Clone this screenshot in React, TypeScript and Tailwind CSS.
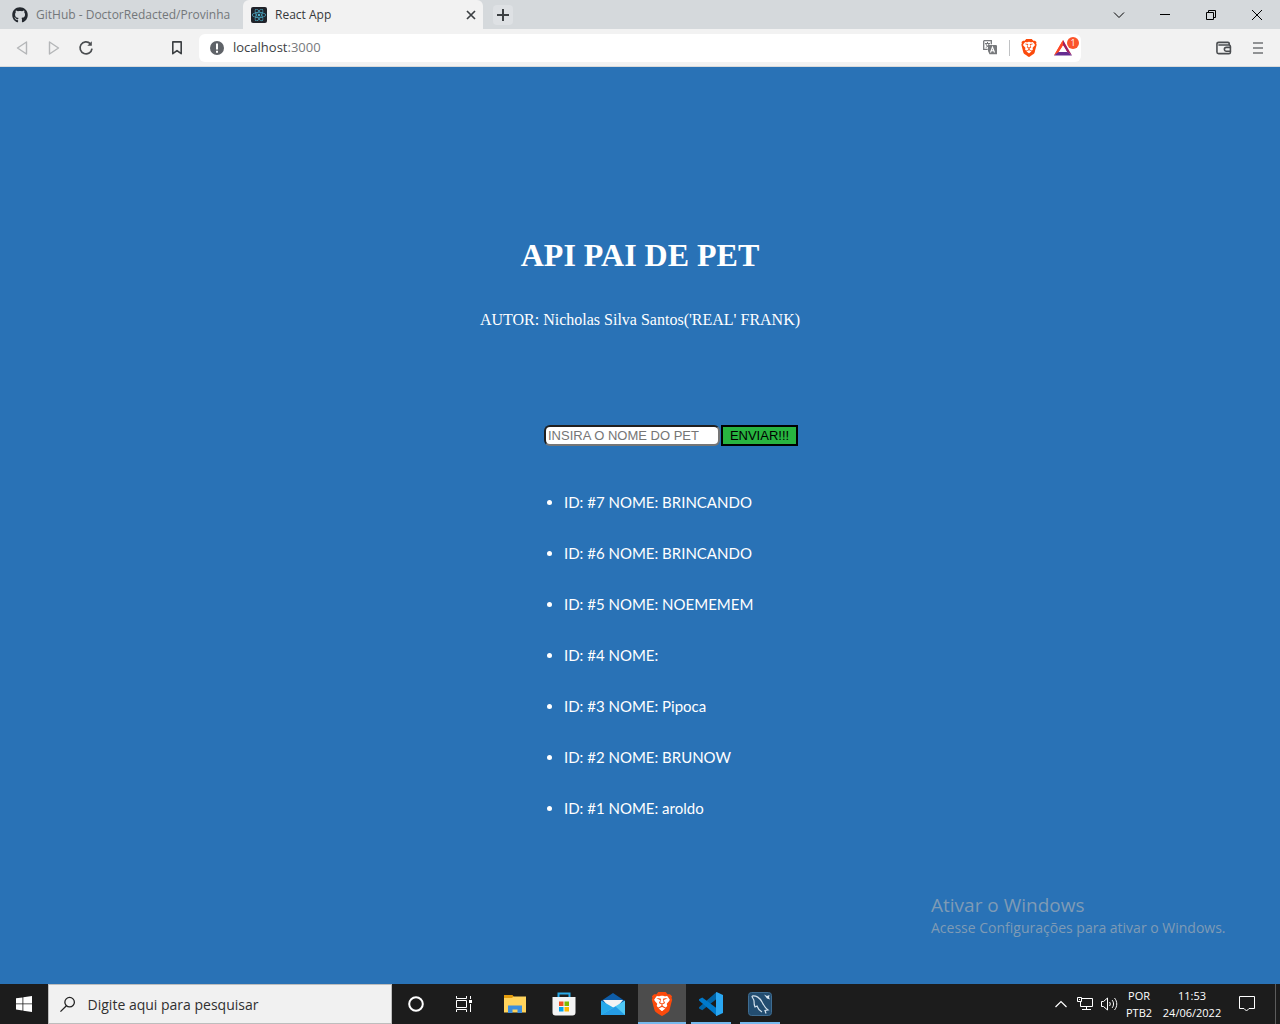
import { FaGithub, FaReact } from "react-icons/fa";
import { SiBrave } from "react-icons/si";

const pets = [
  { id: 7, nome: "BRINCANDO" },
  { id: 6, nome: "BRINCANDO" },
  { id: 5, nome: "NOEMEMEM" },
  { id: 4, nome: "" },
  { id: 3, nome: "Pipoca" },
  { id: 2, nome: "BRUNOW" },
  { id: 1, nome: "aroldo" },
];

function BraveLogo({ size }: { size: number }) {
  return (
    <span className="relative block">
      <svg width={size} height={size} viewBox="0 0 24 24" className="absolute inset-0">
        <path d="M7 3h10l3 4-2 11-6 4-6-4L4 7z" fill="#fff" />
      </svg>
      <SiBrave size={size} className="relative text-[#fb4a0c]" />
    </span>
  );
}

function TabStrip() {
  return (
    <header className="flex h-[29px] items-stretch bg-[#d5d9dc]">
      <div className="flex w-[243px] items-center gap-2 pl-3">
        <FaGithub size={16} className="text-[#24292f]" />
        <a href="#github" className="whitespace-nowrap text-[12px] text-[#73777a]">GitHub - DoctorRedacted/Provinha</a>
      </div>
      <div className="flex w-60 items-center gap-2 rounded-t-md bg-[#f2f2f2] pl-2 pr-[6px]">
        <span className="flex size-4 items-center justify-center rounded-xs bg-[#20232a]">
          <FaReact size={14} className="text-[#4fb3cf]" />
        </span>
        <span className="flex-1 text-[12px] text-[#36393c]">React App</span>
        <button aria-label="Fechar guia" className="flex size-3 items-center justify-center">
          <svg width="12" height="12" viewBox="0 0 12 12" stroke="#3c4043" strokeWidth="1.7"><path d="M2 2l8 8M10 2l-8 8" /></svg>
        </button>
      </div>
      <button aria-label="Nova guia" className="ml-[10px] mt-[5px] flex size-5 items-center justify-center rounded-sm bg-[#dee1e4]">
        <svg width="12" height="12" viewBox="0 0 12 12" stroke="#3c4043" strokeWidth="2"><path d="M6 0v12M0 6h12" /></svg>
      </button>
      <div className="ml-auto flex items-center text-black">
        <button aria-label="Pesquisar guias" className="flex w-[46px] justify-center">
          <svg width="12" height="8" viewBox="0 0 12 8" fill="none" stroke="currentColor"><path d="M1 1.5l5 5 5-5" /></svg>
        </button>
        <button aria-label="Minimizar" className="flex w-[46px] justify-center">
          <svg width="10" height="10" viewBox="0 0 10 10" stroke="currentColor"><path d="M0 4.5h10" /></svg>
        </button>
        <button aria-label="Restaurar" className="flex w-[46px] justify-center">
          <svg width="10" height="10" viewBox="0 0 10 10" fill="none" stroke="currentColor"><path d="M.5 2.5h7v7h-7zM2.500 2V.5h7v7H8" /></svg>
        </button>
        <button aria-label="Fechar" className="flex w-[46px] justify-center">
          <svg width="10" height="10" viewBox="0 0 10 10" stroke="currentColor"><path d="M0 0l10 10M10 0L0 10" /></svg>
        </button>
      </div>
    </header>
  );
}

function Toolbar() {
  return (
    <nav className="flex h-[38px] items-center border-b border-[#d9dadb] bg-[#f2f2f2]">
      <div className="flex w-[199px] items-center pl-4">
        <button aria-label="Voltar" className="mr-5">
          <svg width="12" height="16" viewBox="0 0 12 16" fill="none" stroke="#b4b6b8" strokeWidth="1.4" strokeLinejoin="round"><path d="M10.500 2v12L1.500 8z" /></svg>
        </button>
        <button aria-label="Avançar" className="mr-[18px]">
          <svg width="12" height="16" viewBox="0 0 12 16" fill="none" stroke="#b4b6b8" strokeWidth="1.4" strokeLinejoin="round"><path d="M1.500 2v12l9-6z" /></svg>
        </button>
        <button aria-label="Recarregar">
          <svg width="16" height="16" viewBox="0 0 16 16" fill="none" stroke="#4a4d50" strokeWidth="1.7"><path d="M12.300 3.600A6 6 0 1 0 14 8.600" /><path d="M9.300 5.800h4.500V1.300z" fill="#4a4d50" stroke="none" /></svg>
        </button>
        <button aria-label="Favoritar" className="ml-[77px]">
          <svg width="12" height="16" viewBox="0 0 12 16" fill="none" stroke="#3c4043" strokeWidth="1.6" strokeLinejoin="round"><path d="M1.800 1.900h8.400v11.800L6 10.600l-4.200 3.100z" /></svg>
        </button>
      </div>
      <div className="flex h-7 flex-1 items-center rounded-md bg-white pl-[11px]">
        <svg width="14" height="14" viewBox="0 0 14 14"><circle cx="7" cy="7" r="7" fill="#5f6368" /><path d="M6 2.500h2v6H6zM6 9.700h2v2H6z" fill="#fff" /></svg>
        <div className="relative ml-[9px] flex-1 text-[13px]">
          <span aria-hidden="true" className="text-[#3c4043]">localhost<span className="text-[#777a7d]">:3000</span></span>
          <input aria-label="Endereço" defaultValue="localhost:3000" className="absolute inset-0 w-full bg-transparent text-transparent outline-none" />
        </div>
        <button aria-label="Traduzir">
          <svg width="14" height="15" viewBox="0 0 14 15">
            <path d="M.7.7h7.600v3.500M.7.7v8.600h4" fill="none" stroke="#77797c" strokeWidth="1.3" />
            <path d="M2 3.500h5M4.500 2v1.500M3 4c.4 1.500 1.400 2.600 2.500 3M6 4C5.600 5.500 4 7 2.800 7.400" fill="none" stroke="#77797c" strokeWidth="1" />
            <path d="M5 5h8.200l.8.800v8.400H6.500L5 11z" fill="#77797c" />
            <path d="M7.500 12.500l2-5.500 2 5.500M8.200 10.800h2.600" fill="none" stroke="#fff" strokeWidth="1.1" />
          </svg>
        </button>
        <span className="ml-3 h-4 w-px bg-[#c0c2c4]" />
        <button aria-label="Brave Shields" className="ml-[10px]"><BraveLogo size={18} /></button>
        <button aria-label="Brave Rewards" className="relative ml-4 mr-[9px] w-[18px]">
          <svg width="18" height="16" viewBox="0 0 18 16">
            <path d="M9 0L4.500 11 0 15.500z" fill="#ff4724" />
            <path d="M9 0l3.500 7-3.500-1-5 7-4 2.500z" fill="#ff4724" />
            <path d="M9 0l9 15.500-5-3.500-4-7z" fill="#9e1f63" />
            <path d="M0 15.500L4.500 12h9l4.500 3.500z" fill="#662d91" />
            <path d="M9 5.500l3.800 6.500H5.200z" fill="#fff" />
          </svg>
          <span className="absolute -top-[3px] left-[13px] flex size-3 items-center justify-center rounded-full bg-[#fb542b] text-[9px] leading-3 text-white">1</span>
        </button>
      </div>
      <div className="flex w-[199px] items-center justify-end gap-5 pr-4">
        <button aria-label="Carteira">
          <svg width="16" height="14" viewBox="0 0 17 14" fill="none" stroke="#4a4d50" strokeWidth="1.700"><path d="M14 4V2.300c0-.8-.5-1.300-1.300-1.300H3C1.800 1 1 1.800 1 2.800v8.400C1 12.200 1.800 13 2.800 13h10.900c1 0 1.600-.6 1.600-1.500V5.300c0-.9-.6-1.500-1.500-1.500H2.500" /><path d="M16 6.300h-5a2.100 2.100 0 0 0 0 4.200h5" /></svg>
        </button>
        <button aria-label="Menu">
          <svg width="12" height="12" viewBox="0 0 12 12" stroke="#707376" strokeWidth="1.500"><path d="M1 1h10M1 6h10M1 11h10" /></svg>
        </button>
      </div>
    </nav>
  );
}

function PetPage() {
  return (
    <main className="relative flex-1 bg-[#2972b6] pt-[170px] text-white">
      <div className="text-center font-['Liberation_Serif',serif]">
        <h1 className="text-[32px] leading-9 font-bold">API PAI DE PET</h1>
        <p className="mt-[38px] text-[16px] leading-[18px]">AUTOR: Nicholas Silva Santos('REAL' FRANK)</p>
      </div>
      <div className="mx-auto mt-24 w-fit pl-[62px]">
        <form className="flex gap-px font-['Liberation_Sans',sans-serif] text-[13px]" onSubmit={(e) => e.preventDefault()}>
          <input
            aria-label="Nome do pet"
            placeholder="INSIRA O NOME DO PET"
            className="h-[21px] w-44 rounded-md border-2 border-t-[#1f1f1f] border-l-[#1f1f1f] border-r-[#767676] border-b-[#767676] bg-white px-[2px] text-black placeholder:text-[#757575]"
          />
          <button className="h-[21px] w-[77px] border-2 border-black bg-[#28b440] leading-4 text-black">ENVIAR!!!</button>
        </form>
        <ul className="mt-[47px] list-disc space-y-8 pl-5 font-['Lato',sans-serif] text-[15px] leading-[19px]">
          {pets.map((p) => (
            <li key={p.id}>ID: #{p.id} NOME: {p.nome}</li>
          ))}
        </ul>
      </div>
      <aside className="absolute right-[49px] bottom-[46px] w-[300px] whitespace-nowrap text-[#7f9bb5]">
        <p className="text-[19px] leading-[26px]">Ativar o Windows</p>
        <p className="text-[14px] leading-5">Acesse Configurações para ativar o Windows.</p>
      </aside>
    </main>
  );
}

function Taskbar() {
  return (
    <footer className="flex h-10 items-stretch bg-[#1c1c1c] text-white">
      <button aria-label="Iniciar" className="flex w-12 items-center justify-center">
        <svg width="16" height="16" viewBox="0 0 16 16" fill="#fff"><path d="M0 2.300L6.500 1.400v6.100H0zM7.300 1.200L16 0v7.500H7.300zM0 8.300h6.500v6.200L0 13.600zM7.300 8.300H16V16l-8.700-1.300z" /></svg>
      </button>
      <label className="flex w-[344px] items-center gap-3 border border-[#bdbdbd] bg-[#f1f1f1] pl-[11px]">
        <svg width="17" height="17" viewBox="0 0 17 17" fill="none" stroke="#222" strokeWidth="1.400"><circle cx="10.500" cy="6" r="5.200" /><path d="M7 9.800L.5 16.300" /></svg>
        <input aria-label="Pesquisar" placeholder="Digite aqui para pesquisar" className="w-full bg-transparent text-[14px] outline-none placeholder:text-[#303030]" />
      </label>
      <button aria-label="Cortana" className="flex w-12 items-center justify-center">
        <svg width="16" height="16" viewBox="0 0 16 16" fill="none" stroke="#fff" strokeWidth="2"><circle cx="8" cy="8" r="6.800" /></svg>
      </button>
      <button aria-label="Visão de tarefas" className="flex w-12 items-center justify-center">
        <svg width="16" height="16" viewBox="0 0 16 16" fill="none" stroke="#fff"><path d="M.5 0v2.500h10V0M.5 16v-2.500h10V16M.5 4.500h10v7H.5zM14.500 0v3M14.500 8v8" /><path d="M13 4h3v3h-3z" fill="#fff" stroke="none" /></svg>
      </button>
      <button aria-label="Explorador de Arquivos" className="ml-[3px] flex w-12 items-center justify-center">
        <svg width="22" height="18" viewBox="0 0 22 18"><path d="M0 0h8.500l1.500 2H22v5H0z" fill="#e39b0c" /><path d="M0 3h8l1.500-1.500H22v16H0z" fill="#ffd35c" /><path d="M4 18v-7.500h14V18h-4.500v-3.500h-5V18z" fill="#3b8ede" /></svg>
      </button>
      <button aria-label="Microsoft Store" className="ml-px flex w-12 items-center justify-center">
        <svg width="24" height="24" viewBox="0 0 24 24"><path d="M6.500 6V1.500h11V6" fill="none" stroke="#29a9e8" strokeWidth="2" /><path d="M.5 5h23v15.500a3 3 0 0 1-3 3h-17a3 3 0 0 1-3-3z" fill="#f3f3f3" /><path d="M7 9.500h4.500V14H7z" fill="#f25022" /><path d="M12.500 9.500H17V14h-4.500z" fill="#7fba00" /><path d="M7 15h4.500v4.500H7z" fill="#00a4ef" /><path d="M12.500 15H17v4.500h-4.500z" fill="#ffb900" /></svg>
      </button>
      <button aria-label="Email" className="flex w-[50px] items-center justify-center">
        <svg width="24" height="22" viewBox="0 0 24 22"><path d="M0 8L12 0l12 8v6H0z" fill="#0e5da8" /><path d="M2 7h20l-5 6-5 3-5-3z" fill="#f4f4f4" /><path d="M0 7.500l14 8L4 22H0z" fill="#27aaeb" /><path d="M24 7.500V22H0z" fill="#4fc8f5" /><path d="M0 22h24l-9.500-8.500z" fill="#259ce5" /></svg>
      </button>
      <button aria-label="Brave" className="flex w-12 items-center justify-center border-b-2 border-[#76b9ed] bg-[#4c4c4c] pt-[2px]"><BraveLogo size={24} /></button>
      <button aria-label="Visual Studio Code" className="mx-[5px] flex w-10 items-center justify-center border-b-2 border-[#76b9ed] pt-[2px]">
        <svg width="24" height="24" viewBox="0 0 24 24"><path d="M17.500 0v7L3.300 18.200 0 16.500v-1.200z" fill="#0065a9" /><path d="M0 8.500v-1.200l3.300-1.700L18 16.500V24z" fill="#007acc" /><path d="M17.500 0L24 3v18l-6.500 3c-.5 0-.5-.5-.5-1V1c0-.6.1-1 .5-1z" fill="#2aa7f2" /></svg>
      </button>
      <button aria-label="MySQL Workbench" className="ml-1 flex w-10 items-center justify-center border-b-2 border-[#76b9ed] pt-[2px]">
        <svg width="24" height="24" viewBox="0 0 24 24" fill="none"><rect x=".5" y=".5" width="23" height="23" rx="3" fill="#234d70" stroke="#3e6c91" /><path d="M4 4c4-1 8 2 10 6 2 4 3 6 6 8l-3 .5 1 3M4 4c0 2 2 3 2 5s0 4 1 6l2-1c1 3 3 5 5 6" stroke="#d4e2ed" strokeWidth="1.200" /><path d="M16 2.500l3 1.500 2.500-1-.5 2.500 1 2-3-1z" fill="#dce9f2" /></svg>
      </button>
      <div className="ml-auto flex items-center">
        <button aria-label="Mostrar ícones ocultos">
          <svg width="12" height="8" viewBox="0 0 12 8" fill="none" stroke="#fff" strokeWidth="1.200"><path d="M.5 7L6 1.500 11.500 7" /></svg>
        </button>
        <button aria-label="Rede" className="ml-[10px]">
          <svg width="16" height="14" viewBox="0 0 16 14" fill="none" stroke="#fff"><path d="M5 1.500h10.500v8h-12V5M9.500 9.500v3M5 12.500h9M.5.500h4v4h-4zM2.500 2v1" /></svg>
        </button>
        <button aria-label="Volume" className="ml-2">
          <svg width="17" height="14" viewBox="0 0 17 14" fill="none" stroke="#fff"><path d="M.5 4.500h2L6.500 1v12l-4-3.500h-2zM8.500 5c1 1.200 1 2.800 0 4M11 3c2 2.200 2 5.800 0 8M13.500 1c3 3.500 3 8.500 0 12" /></svg>
        </button>
        <div className="ml-[7px] w-7 pb-px text-center text-[11px] leading-[17px]">POR<br />PTB2</div>
        <time className="ml-2 w-[62px] pb-px text-center text-[11px] leading-[17px]">11:53<br />24/06/2022</time>
        <button aria-label="Notificações" className="mr-5 ml-4">
          <svg width="16" height="16" viewBox="0 0 16 16" fill="none" stroke="#fff"><path d="M.5.500h15v12H10L7.500 15 5 12.500H.5z" /></svg>
        </button>
        <span className="mr-1 h-10 w-px bg-[#5c5c5c]" />
      </div>
    </footer>
  );
}

export default function App() {
  return (
    <div className="flex min-h-screen flex-col font-['Open_Sans','Noto_Sans',sans-serif]">
      <TabStrip />
      <Toolbar />
      <PetPage />
      <Taskbar />
    </div>
  );
}
